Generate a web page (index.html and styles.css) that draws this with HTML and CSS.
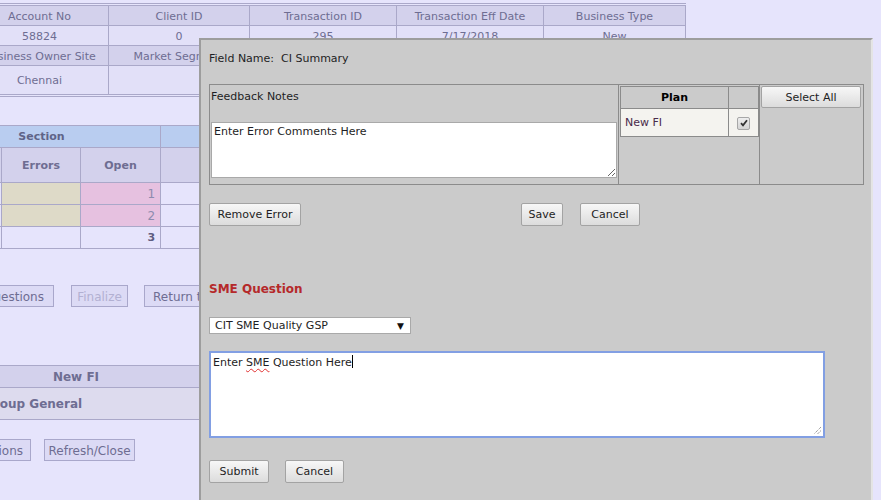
FILE: index.html
```html
<!DOCTYPE html>
<html lang="en">
<head>
    <meta charset="UTF-8">
    <title>Review - CI Summary</title>
    <link rel="stylesheet" href="styles.css">
</head>
<body>
    <div class="page">
        <div class="info-wrap">
            <table class="info">
                <tr class="head">
                    <td class="c1">Account No</td>
                    <td class="c2">Client ID</td>
                    <td class="c3">Transaction ID</td>
                    <td class="c4">Transaction Eff Date</td>
                    <td class="c5">Business Type</td>
                </tr>
                <tr>
                    <td>58824</td>
                    <td>0</td>
                    <td>295</td>
                    <td>7/17/2018</td>
                    <td>New</td>
                </tr>
                <tr class="head">
                    <td>Business Owner Site</td>
                    <td>Market Segment</td>
                    <td>Product</td>
                    <td>Plan Type</td>
                    <td>Status</td>
                </tr>
                <tr class="tall">
                    <td>Chennai</td>
                    <td></td>
                    <td></td>
                    <td></td>
                    <td></td>
                </tr>
            </table>
        </div>

        <table class="section">
            <colgroup>
                <col class="s1">
                <col class="s2">
                <col class="s3">
                <col class="s4">
                <col class="s5">
            </colgroup>
            <tr class="sec-head">
                <td colspan="3">Section</td>
                <td colspan="2">Summary</td>
            </tr>
            <tr class="sub-head">
                <td>Name</td>
                <td>Errors</td>
                <td>Open</td>
                <td>Count</td>
                <td>Closed</td>
            </tr>
            <tr>
                <td></td>
                <td class="err"></td>
                <td class="open">1</td>
                <td></td>
                <td></td>
            </tr>
            <tr>
                <td></td>
                <td class="err"></td>
                <td class="open">2</td>
                <td></td>
                <td></td>
            </tr>
            <tr class="total">
                <td></td>
                <td></td>
                <td class="num">3</td>
                <td></td>
                <td></td>
            </tr>
        </table>

        <div class="bg-buttons first">
            <button class="bg-btn q1">Questions</button>
            <button class="bg-btn fin" disabled>Finalize</button>
            <button class="bg-btn ret">Return to List</button>
        </div>

        <table class="plan-bg">
            <tr class="plan-title"><td>New FI</td></tr>
            <tr class="plan-group"><td>Group General</td></tr>
        </table>

        <div class="bg-buttons second">
            <button class="bg-btn q2">Questions</button>
            <button class="bg-btn refresh">Refresh/Close</button>
        </div>
    </div>

    <div class="modal">
        <div class="field-name">Field Name:&nbsp; CI Summary</div>

        <table class="feedback">
            <tr>
                <td class="notes">
                    <div class="notes-label">Feedback Notes</div>
                    <textarea class="notes-text">Enter Error Comments Here</textarea>
                </td>
                <td class="plans">
                    <table class="plan">
                        <tr class="plan-head">
                            <th class="p1">Plan</th>
                            <th class="p2"></th>
                        </tr>
                        <tr class="plan-row">
                            <td>New FI</td>
                            <td class="check-cell">
                                <span class="check">
                                    <svg width="8" height="8" viewBox="0 0 8 8"><path d="M1 4.2 L3 6.3 L7 1.2" fill="none" stroke="#333" stroke-width="1.8"/></svg>
                                </span>
                            </td>
                        </tr>
                    </table>
                </td>
                <td class="actions">
                    <button class="btn select-all">Select All</button>
                </td>
            </tr>
        </table>

        <div class="row-buttons">
            <button class="btn remove">Remove Error</button>
            <button class="btn save">Save</button>
            <button class="btn cancel">Cancel</button>
        </div>

        <h3 class="sme-title">SME Question</h3>

        <div class="select">
            <span>CIT SME Quality GSP</span>
            <span class="arrow">&#9660;</span>
        </div>

        <div class="sme-text">Enter <span class="typo">SME</span> Question Here<span class="caret"></span>
            <svg class="grip" width="9" height="9" viewBox="0 0 9 9"><path d="M8 1 L1 8 M8 4.5 L4.5 8" stroke="#777" stroke-width="1" stroke-dasharray="1 1"/></svg>
        </div>

        <div class="row-buttons bottom">
            <button class="btn submit">Submit</button>
            <button class="btn cancel2">Cancel</button>
        </div>
    </div>
</body>
</html>
```

FILE: styles.css
```css
* {
    box-sizing: border-box;
}

body {
    margin: 0;
    height: 500px;
    overflow: hidden;
    background: #e6e4fc;
    font-family: "DejaVu Sans", Verdana, sans-serif;
    font-size: 11px;
}

button {
    font-family: "DejaVu Sans", Verdana, sans-serif;
    font-size: 11px;
    padding: 0;
    cursor: pointer;
}

/* background page */
.page {
    color: #6e6d92;
}

.page table {
    border-collapse: collapse;
    table-layout: fixed;
}

.page td {
    border: 1px solid #aaa8c9;
    padding: 0;
}

.info-wrap {
    margin: 3px 0 0 -30px;
    width: 716px;
    padding: 1px 0;
    border-top: 1px solid #aaa8c9;
    border-bottom: 1px solid #aaa8c9;
}

.info {
    width: 715px;
}

.info td {
    height: 20px;
    padding-top: 1px;
    text-align: center;
    background: #e2e0f8;
}

.info .head td {
    background: #d3d1ec;
}

.info .tall td {
    height: 29px;
}

.c1 { width: 138px; }
.c2 { width: 141px; }
.c3 { width: 147px; }
.c4 { width: 147px; }
.c5 { width: 142px; }

.section {
    margin: 28px 0 0 -78px;
    width: 478px;
}

.section td {
    height: 22px;
    background: #e6e4fc;
}

.s1 { width: 79px; }
.s2 { width: 79px; }
.s3 { width: 80px; }
.s4 { width: 120px; }
.s5 { width: 120px; }

.section .sec-head td {
    background: #b9cdf0;
    font-weight: bold;
    text-align: center;
    color: #5f6488;
}

.section .sub-head td {
    height: 35px;
    background: #d3d1ec;
    font-weight: bold;
    text-align: center;
    color: #6e6d92;
}

.section .err {
    background: #dedac8;
}

.section .open {
    background: #e6c1e0;
    text-align: right;
    padding-right: 5px;
    color: #8c8bae;
    font-size: 12px;
}

.section .num {
    text-align: right;
    padding-right: 5px;
    font-weight: bold;
    color: #5e5d80;
}

.bg-buttons {
    display: flex;
    height: 22px;
}

.bg-buttons.first {
    margin-top: 36px;
}

.bg-buttons.second {
    margin-top: 19px;
}

.bg-btn {
    height: 22px;
    padding-top: 2px;
    background: #dcdaf5;
    border: 1px solid #a9a7cb;
    color: #6e6d92;
    font-size: 12px;
}

.q1 { width: 80px; margin-left: -26px; }
.fin { width: 57px; margin-left: 17px; color: #b2b0d2; }
.ret { width: 120px; margin-left: 16px; text-align: left; padding-left: 8px; }
.q2 { width: 80px; margin-left: -49px; text-align: right; padding-right: 7px; }
.refresh { width: 91px; margin-left: 13px; }

.plan-bg {
    margin: 58px 0 0 -100px;
    width: 352px;
}

.plan-bg td {
    font-weight: bold;
    font-size: 12px;
}

.plan-title td {
    height: 22px;
    text-align: center;
    background: #d3d1ec;
}

.plan-group td {
    height: 32px;
    padding-left: 83px;
    background: #dddbee;
}

/* popup */
.modal {
    position: absolute;
    left: 199px;
    top: 38px;
    width: 674px;
    height: 470px;
    padding-left: 8px;
    background: #cbcbcb;
    border-top: 2px solid #9d9d9d;
    border-left: 2px solid #9d9d9d;
    border-right: 2px solid #e4e4e4;
    color: #1e1e24;
}

.field-name {
    margin-top: 12px;
    line-height: 13px;
}

.feedback {
    margin-top: 19px;
    width: 654px;
    border-collapse: collapse;
    table-layout: fixed;
}

.feedback > tbody > tr > td {
    border: 1px solid #8b8b8b;
    padding: 1px;
    vertical-align: top;
    height: 100px;
}

.notes { width: 409px; }
.plans { width: 141px; }
.actions { width: 104px; }

.notes-label {
    margin-top: 4px;
    line-height: 13px;
}

.notes-text {
    display: block;
    margin-top: 19px;
    width: 406px;
    height: 56px;
    padding: 2px;
    border: 1px solid #a9a9a9;
    font-family: "DejaVu Sans", Verdana, sans-serif;
    font-size: 11px;
    color: #1e1e24;
    background: #fff;
}

.plan {
    width: 138px;
    border-collapse: collapse;
    table-layout: fixed;
}

.plan th,
.plan td {
    border: 1px solid #8b8b8b;
    padding: 0;
}

.p1 { width: 108px; }
.p2 { width: 30px; }

.plan-head th {
    height: 22px;
    font-size: 11px;
    color: #000;
    background: #cbcbcb;
}

.plan-row td {
    height: 28px;
    padding-left: 4px;
    background: #f4f3ef;
    color: #4a2a4a;
}

.plan-row .check-cell {
    padding: 0;
    text-align: center;
}

.check {
    display: inline-flex;
    align-items: center;
    justify-content: center;
    width: 13px;
    height: 13px;
    margin-top: 2px;
    border: 1px solid #a7a7a7;
    border-radius: 2px;
    background: linear-gradient(#eeeeee, #d4d4d4);
}

.btn {
    height: 23px;
    background: linear-gradient(#f7f7f7, #dcdcdc);
    border: 1px solid #a3a3a3;
    border-radius: 2px;
    color: #1e1e24;
}

.select-all {
    width: 100px;
    height: 22px;
}

.row-buttons {
    display: flex;
    margin-top: 18px;
}

.remove { width: 92px; }
.save { width: 42px; margin-left: 220px; }
.cancel { width: 60px; margin-left: 17px; }

.sme-title {
    margin: 56px 0 0;
    font-size: 12px;
    line-height: 15px;
    color: #b5292a;
}

.select {
    display: flex;
    justify-content: space-between;
    align-items: center;
    margin-top: 20px;
    width: 202px;
    height: 17px;
    padding: 0 6px 0 5px;
    background: #fff;
    border: 1px solid #a9a9a9;
}

.select .arrow {
    font-size: 9px;
    color: #111;
}

.sme-text {
    position: relative;
    margin-top: 17px;
    width: 616px;
    height: 87px;
    padding: 2px 2px;
    background: #fff;
    border: 2px solid #829fe3;
    line-height: 14px;
}

.typo {
    text-decoration: underline wavy #e03030;
    text-decoration-thickness: 1px;
    text-underline-offset: 2px;
}

.caret {
    display: inline-block;
    width: 1px;
    height: 13px;
    vertical-align: -2px;
    background: #000;
}

.grip {
    position: absolute;
    right: 1px;
    bottom: 1px;
}

.row-buttons.bottom {
    margin-top: 22px;
}

.submit { width: 60px; }
.cancel2 { width: 59px; margin-left: 16px; }
```
